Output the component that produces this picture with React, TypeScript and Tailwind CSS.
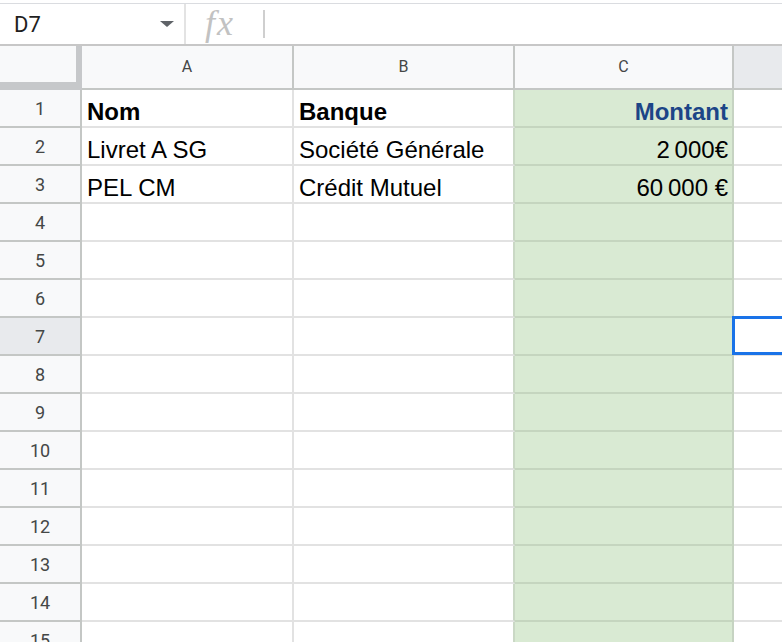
import React from "react";

type Row = { a?: string; b?: string; c?: string; bold?: boolean };

const data: Row[] = [
  { a: "Nom", b: "Banque", c: "Montant", bold: true },
  { a: "Livret A SG", b: "Société Générale", c: "2\u202F000€" },
  { a: "PEL CM", b: "Crédit Mutuel", c: "60\u202F000 €" },
];

const allRows: Row[] = [...data];
for (let i = allRows.length; i < 15; i++) allRows.push({});

export default function App() {
  return (
    <div className="relative w-[782px] h-[642px] overflow-hidden bg-white font-['Liberation_Sans',Arial,sans-serif]">
      <div className="h-[3px]" />
      {/* Formula bar */}
      <div className="flex h-[43px] border-t border-[#dadce0] border-b-2 border-b-[#c7c7c7]">
        <div className="flex w-[186px] items-center justify-between border-r-2 border-[#e3e3e3] pl-[14px] pr-[10px]">
          <span className="font-['Roboto',sans-serif] text-[22px] text-[#1f1f1f]">D7</span>
          <svg width="14" height="6" viewBox="0 0 14 6">
            <polygon points="0,0 14,0 7,6" fill="#5f6368" />
          </svg>
        </div>
        <div className="flex w-[77px] items-center pl-[19px] pb-[2px]">
          <span className="font-['Liberation_Serif',serif] italic text-[36px] tracking-[2px] leading-none text-[#c2c2c2]">fx</span>
        </div>
        <div className="flex items-center">
          <div className="h-[28px] w-[2px] bg-[#cfcfcf]" />
        </div>
      </div>

      {/* Grid */}
      <div className="grid grid-cols-[82px_212px_221px_219px_1fr]">
        {/* Header row */}
        <div className="h-[44px] bg-[#f8f9fa] border-r-[6px] border-b-[8px] border-[#c6c8ca]" />
        {["A", "B", "C"].map((l) => (
          <div
            key={l}
            className="flex h-[44px] items-center justify-center bg-[#f8f9fa] border-r-2 border-b-2 border-[#c4c7c5] font-['Roboto',sans-serif] text-[16px] text-[#444746]"
          >
            {l}
          </div>
        ))}
        <div className="h-[44px] bg-[#e8eaed] border-b-2 border-[#c4c7c5]" />

        {allRows.map((r, i) => {
          const n = i + 1;
          const sel = n === 7;
          return (
            <React.Fragment key={n}>
              <div
                className={`flex h-[38px] items-center justify-center border-r-2 border-b-2 border-[#c4c7c5] font-['Roboto',sans-serif] text-[18px] text-[#444746] ${
                  sel ? "bg-[#e8eaed]" : "bg-[#f8f9fa]"
                }`}
              >
                {n}
              </div>
              <div
                className={`flex h-[38px] items-end border-r-2 border-b-2 border-[#e2e2e2] pl-[5px] pb-[2px] text-[24px] leading-none text-black whitespace-nowrap ${
                  r.bold ? "font-bold" : ""
                }`}
              >
                {r.a}
              </div>
              <div
                className={`flex h-[38px] items-end border-r-2 border-r-[#cad8c5] border-b-2 border-b-[#e2e2e2] pl-[5px] pb-[2px] text-[24px] leading-none text-black whitespace-nowrap ${
                  r.bold ? "font-bold" : ""
                }`}
              >
                {r.b}
              </div>
              <div
                className={`flex h-[38px] items-end justify-end bg-[#d9ead3] border-r-2 border-r-[#c6d3c2] border-b-2 border-b-[#c5d5bf] pr-[4px] pb-[2px] text-[24px] leading-none whitespace-nowrap ${
                  r.bold ? "font-bold text-[#1c4587]" : "text-black"
                }`}
              >
                {r.c}
              </div>
              <div className="relative h-[38px] border-b-2 border-[#e2e2e2]">
                {sel && (
                  <div className="absolute -left-[2px] -top-[2px] h-[39px] w-[60px] border-[3px] border-[#1a73e8]" />
                )}
              </div>
            </React.Fragment>
          );
        })}
      </div>
    </div>
  );
}
